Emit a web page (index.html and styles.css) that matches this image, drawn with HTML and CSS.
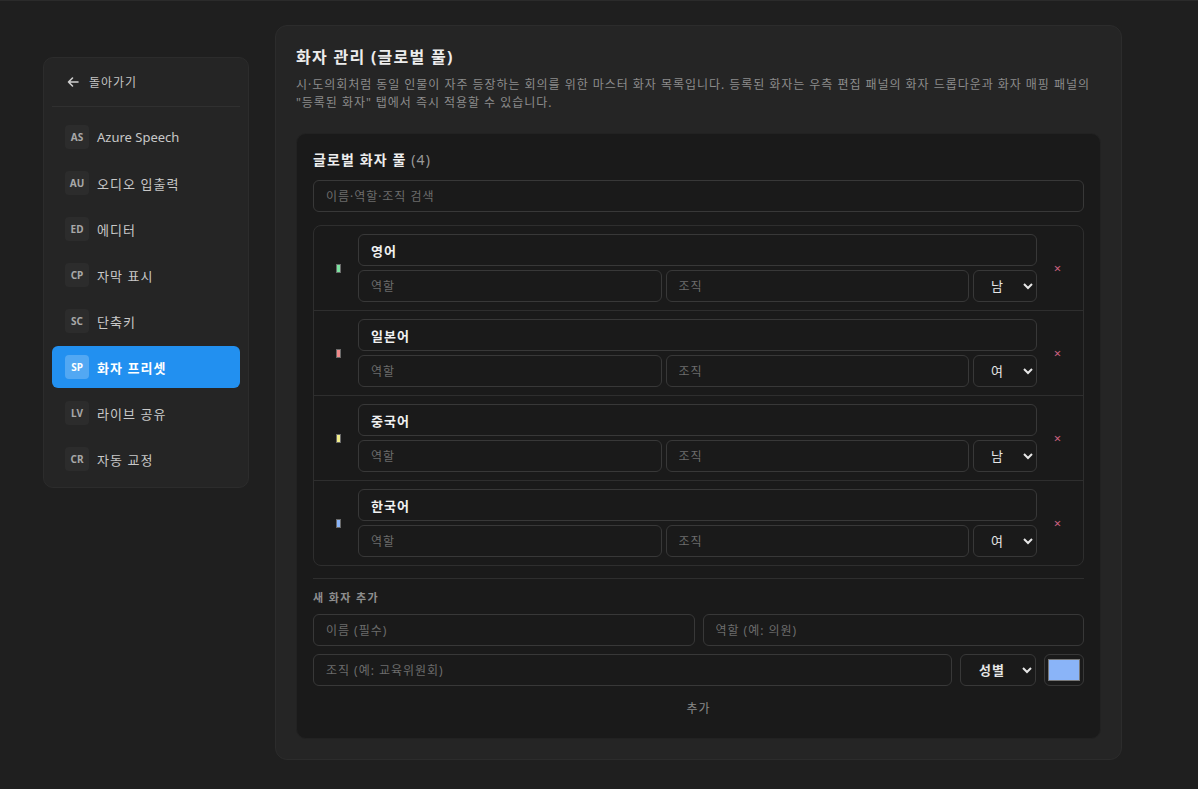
FILE: index.html
```html
<!DOCTYPE html>
<html lang="ko">
<head>
    <meta charset="UTF-8">
    <title>화자 관리</title>
    <link rel="stylesheet" href="styles.css">
</head>
<body>
<div class="page">
    <div class="side">
        <div class="back">
            <svg width="14" height="14" viewBox="0 0 14 14" fill="none" stroke="#cfcfcf" stroke-width="1.6" stroke-linecap="round" stroke-linejoin="round"><path d="M12 7H2.5M6.5 3 2.5 7l4 4"/></svg>
            <span>돌아가기</span>
        </div>
        <ul class="nav">
            <li><b>AS</b><span class="en">Azure Speech</span></li>
            <li><b>AU</b><span>오디오 입출력</span></li>
            <li><b>ED</b><span>에디터</span></li>
            <li><b>CP</b><span>자막 표시</span></li>
            <li><b>SC</b><span>단축키</span></li>
            <li class="on"><b>SP</b><span>화자 프리셋</span></li>
            <li><b>LV</b><span>라이브 공유</span></li>
            <li><b>CR</b><span>자동 교정</span></li>
        </ul>
    </div>

    <div class="main">
        <h1>화자 관리 (글로벌 풀)</h1>
        <p class="desc">시·도의회처럼 동일 인물이 자주 등장하는 회의를 위한 마스터 화자 목록입니다. 등록된 화자는 우측 편집 패널의 화자 드롭다운과 화자 매핑 패널의 "등록된 화자" 탭에서 즉시 적용할 수 있습니다.</p>

        <div class="card">
            <h2>글로벌 화자 풀 <span>(4)</span></h2>
            <input class="field search" type="text" placeholder="이름·역할·조직 검색">

            <div class="list">
                <div class="row">
                    <div class="mark"><i style="background:#7be3a0"></i></div>
                    <div class="fields">
                        <input class="field name" type="text" value="영어">
                        <div class="line">
                            <input class="field" type="text" placeholder="역할">
                            <input class="field" type="text" placeholder="조직">
                            <select class="field sel"><option>남</option><option>여</option></select>
                        </div>
                    </div>
                    <button class="del">×</button>
                </div>
                <div class="row">
                    <div class="mark"><i style="background:#f08a8a"></i></div>
                    <div class="fields">
                        <input class="field name" type="text" value="일본어">
                        <div class="line">
                            <input class="field" type="text" placeholder="역할">
                            <input class="field" type="text" placeholder="조직">
                            <select class="field sel"><option>여</option><option>남</option></select>
                        </div>
                    </div>
                    <button class="del">×</button>
                </div>
                <div class="row">
                    <div class="mark"><i style="background:#f2ee8a"></i></div>
                    <div class="fields">
                        <input class="field name" type="text" value="중국어">
                        <div class="line">
                            <input class="field" type="text" placeholder="역할">
                            <input class="field" type="text" placeholder="조직">
                            <select class="field sel"><option>남</option><option>여</option></select>
                        </div>
                    </div>
                    <button class="del">×</button>
                </div>
                <div class="row">
                    <div class="mark"><i style="background:#8ab4f8"></i></div>
                    <div class="fields">
                        <input class="field name" type="text" value="한국어">
                        <div class="line">
                            <input class="field" type="text" placeholder="역할">
                            <input class="field" type="text" placeholder="조직">
                            <select class="field sel"><option>여</option><option>남</option></select>
                        </div>
                    </div>
                    <button class="del">×</button>
                </div>
            </div>

            <div class="add">
                <h3>새 화자 추가</h3>
                <div class="pair">
                    <input class="field" type="text" placeholder="이름 (필수)">
                    <input class="field" type="text" placeholder="역할 (예: 의원)">
                </div>
                <div class="org">
                    <input class="field" type="text" placeholder="조직 (예: 교육위원회)">
                    <select class="field gender"><option>성별</option><option>남</option><option>여</option></select>
                    <div class="swatch"><i></i></div>
                </div>
                <button class="addbtn">추가</button>
            </div>
        </div>
    </div>
</div>
</body>
</html>
```

FILE: styles.css
```css
* {
    margin: 0;
    padding: 0;
    box-sizing: border-box;
}

html, body {
    height: 100%;
}

body {
    background: #1f1f1f;
    border-top: 1px solid #2b2b2b;
    color: #e6e6e6;
    font-family: "Noto Sans", "Noto Sans CJK KR", sans-serif;
    color-scheme: dark;
}

/* hangul in the CJK font is narrower than in the original, widen a bit */
.back, .nav span, h1, .desc, h2, .field, .del, .addbtn {
    letter-spacing: .08em;
}

.nav span.en {
    letter-spacing: 0;
}

.page {
    display: flex;
    align-items: flex-start;
    gap: 26px;
    padding: 24px 0 0 43px;
}

/* sidebar */
.side {
    width: 206px;
    margin-top: 32px;
    padding: 8px 8px 7px;
    background: #252525;
    border: 1px solid #2c2c2c;
    border-radius: 10px;
}

.back {
    display: flex;
    align-items: center;
    gap: 9px;
    height: 32px;
    padding: 0 14px;
    font-size: 12px;
    color: #c4c4c4;
    margin-bottom: 8px;
}

.nav {
    list-style: none;
    border-top: 1px solid #303030;
    padding-top: 9px;
}

.nav li {
    display: flex;
    align-items: center;
    gap: 8px;
    height: 42px;
    padding: 0 13px;
    margin-bottom: 4px;
    border-radius: 6px;
    font-size: 13px;
    color: #c8c8c8;
}

.nav li:last-child {
    margin-bottom: 0;
}

.nav li b {
    width: 24px;
    height: 24px;
    line-height: 24px;
    text-align: center;
    border-radius: 4px;
    background: #2c2c2c;
    font-size: 10px;
    font-weight: 700;
    color: #a8a8a8;
}

.nav li.on {
    background: #2290f0;
    color: #fff;
    font-weight: 700;
}

.nav li.on b {
    background: rgba(255, 255, 255, .22);
    color: #fff;
}

/* main panel */
.main {
    width: 847px;
    padding: 20px;
    background: #252525;
    border: 1px solid #2c2c2c;
    border-radius: 12px;
}

.main h1 {
    font-size: 16px;
    line-height: 22px;
    font-weight: 700;
    color: #ececec;
}

.desc {
    margin-top: 8px;
    font-size: 12px;
    line-height: 18px;
    color: #8c8c8c;
}

.card {
    margin-top: 21px;
    padding: 16px;
    background: #1a1a1a;
    border: 1px solid #222;
    border-radius: 10px;
}

.card h2 {
    font-size: 14px;
    line-height: 20px;
    font-weight: 700;
    color: #ededed;
}

.card h2 span {
    font-weight: 400;
    color: #9a9a9a;
}

.field {
    display: block;
    width: 100%;
    height: 32px;
    padding: 0 12px;
    background: #1a1a1a;
    border: 1px solid #383838;
    border-radius: 6px;
    font-family: inherit;
    font-size: 12px;
    color: #e6e6e6;
    outline: none;
}

.field::placeholder {
    color: #6c6c6c;
}

.search {
    margin-top: 10px;
}

.list {
    margin-top: 13px;
    border: 1px solid #2e2e2e;
    border-radius: 8px;
}

.row {
    display: flex;
    align-items: center;
    gap: 8px;
    padding: 8px 12px;
    border-top: 1px solid #2e2e2e;
}

.row:first-child {
    border-top: 0;
}

.mark {
    width: 24px;
    display: flex;
    justify-content: center;
}

.mark i {
    display: block;
    width: 3px;
    height: 7px;
    outline: 1px solid #6a6a6a;
}

.fields {
    flex: 1;
    display: flex;
    flex-direction: column;
    gap: 4px;
}

.field.name {
    font-size: 13px;
    font-weight: 700;
    color: #f0f0f0;
}

.line {
    display: flex;
    gap: 4px;
}

.line .field {
    flex: 1;
}

.line .sel {
    flex: 0 0 64px;
    padding: 0 4px 0 13px;
    font-size: 13px;
}

.del {
    width: 26px;
    background: none;
    border: 0;
    font-size: 13px;
    color: #c8607e;
    font-family: inherit;
}

.add {
    margin-top: 12px;
    border-top: 1px solid #2e2e2e;
    padding-top: 11px;
}

.add h3 {
    font-size: 11px;
    line-height: 16px;
    font-weight: 700;
    color: #8e8e8e;
    letter-spacing: 1.4px;
}

.pair {
    display: flex;
    gap: 8px;
    margin-top: 8px;
}

.org {
    display: flex;
    gap: 8px;
    margin-top: 8px;
}

.org .gender {
    flex: 0 0 76px;
    padding: 0 4px 0 14px;
    font-size: 13px;
    font-weight: 700;
}

.swatch {
    flex: 0 0 40px;
    height: 32px;
    padding: 4px 3px;
    border: 1px solid #383838;
    border-radius: 6px;
}

.swatch i {
    display: block;
    height: 100%;
    background: #8ab4f8;
    border: 1px solid #777;
}

.addbtn {
    display: block;
    width: 100%;
    height: 28px;
    margin-top: 8px;
    background: none;
    border: 0;
    font-family: inherit;
    font-size: 12px;
    color: #8a8a8a;
}
```
